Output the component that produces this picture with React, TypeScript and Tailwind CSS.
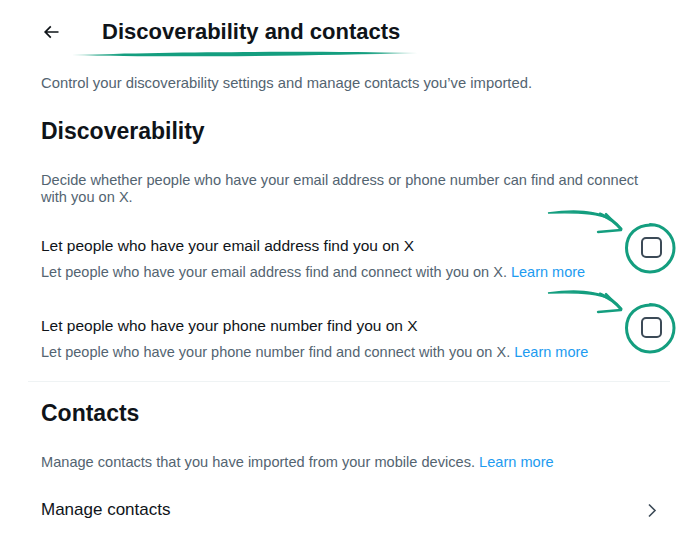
import React from "react";

const font = { fontFamily: '"Liberation Sans", Arial, sans-serif' };

function Checkbox() {
  return (
    <div className="w-[21px] h-[21px] rounded-[5px] border-2 border-[#3c4a57] bg-white" />
  );
}

function Row({ title, sub }: { title: string; sub: string }) {
  return (
    <div className="flex justify-between items-start pl-[13px] pr-[8px]">
      <div className="flex flex-col">
        <div className="text-[15.5px] leading-[20px] text-[#0f1419]">{title}</div>
        <div className="mt-[6px] text-[14.5px] leading-[20px] text-[#536471]">
          {sub} <span className="text-[#1d9bf0]">Learn more</span>
        </div>
      </div>
      <div className="mt-[1px]">
        <Checkbox />
      </div>
    </div>
  );
}

export default function App() {
  return (
    <div className="relative w-[700px] h-[558px] bg-white overflow-hidden" style={font}>
      <div className="ml-[28px] w-[642px] flex flex-col">
        {/* header */}
        <div className="h-[64px] flex items-center pl-[13px]">
          <svg width="20" height="20" viewBox="0 0 24 24" className="text-[#0f1419]">
            <path d="M7.414 13l5.043 5.04-1.414 1.42L3.586 12l7.457-7.46 1.414 1.42L7.414 11H21v2H7.414z" fill="currentColor" />
          </svg>
          <div className="ml-[41px] text-[22px] leading-[28px] font-bold text-[#0f1419]">
            Discoverability and contacts
          </div>
        </div>
        <div className="h-[38px] flex items-center pl-[13px] text-[14.8px] text-[#536471]">
          Control your discoverability settings and manage contacts you’ve imported.
        </div>
        <div className="h-[58px] flex items-center pl-[13px] text-[23px] font-bold text-[#0f1419]">
          Discoverability
        </div>
        <div className="pt-[12px] pl-[13px] max-w-[625px] text-[14.6px] leading-[17px] text-[#536471]">
          Decide whether people who have your email address or phone number can find and connect with you on X.
        </div>
        <div className="mt-[30px]">
          <Row
            title="Let people who have your email address find you on X"
            sub="Let people who have your email address find and connect with you on X."
          />
        </div>
        <div className="mt-[34px]">
          <Row
            title="Let people who have your phone number find you on X"
            sub="Let people who have your phone number find and connect with you on X."
          />
        </div>
        <div className="mt-[19px] h-px bg-[#eff3f4]" />
        <div className="mt-[17px] pl-[13px] text-[23px] leading-[28px] font-bold text-[#0f1419]">
          Contacts
        </div>
        <div className="mt-[25px] pl-[13px] text-[14.6px] leading-[20px] text-[#536471]">
          Manage contacts that you have imported from your mobile devices.{" "}
          <span className="text-[#1d9bf0]">Learn more</span>
        </div>
        <div className="mt-[28px] pl-[13px] pr-[13px] flex items-center justify-between">
          <div className="text-[17px] leading-[20px] text-[#0f1419]">Manage contacts</div>
          <svg width="10" height="15" viewBox="0 0 10 15">
            <path d="M2 1.5l6 6-6 6" fill="none" stroke="#3c4a57" strokeWidth="1.6" />
          </svg>
        </div>
      </div>

      {/* annotations overlay */}
      <svg
        className="absolute left-0 top-0 pointer-events-none"
        width="700"
        height="558"
        viewBox="0 0 700 558"
      >
        <defs>
          <linearGradient id="sw" x1="72" y1="0" x2="418" y2="0" gradientUnits="userSpaceOnUse">
            <stop offset="0" stopColor="#19a07f" stopOpacity="0.5" />
            <stop offset="0.15" stopColor="#149e7f" />
            <stop offset="0.85" stopColor="#149e7f" />
            <stop offset="1" stopColor="#19a07f" stopOpacity="0.3" />
          </linearGradient>
        </defs>
        <path d="M72 55 C 170 51.5, 320 51, 418 53 C 320 55.5, 170 58, 72 55 Z" fill="url(#sw)" />
        {[0, 80].map((dy) => (
          <g key={dy} transform={`translate(0 ${dy})`} stroke="#149e7f" strokeLinecap="round" fill="none">
            <path d="M548 213 C 575 209, 597 211, 607 218 C 597 213.5, 575 212, 548 213 Z" fill="#149e7f" strokeWidth="1.5" />
            <path d="M600 214 C 610 218, 616 223, 621 229" strokeWidth="3" />
            <path d="M606 214 L 621 229" strokeWidth="2.4" />
            <path d="M598 232 L 621 230" strokeWidth="2.4" />
            <path
              d="M650 224.5 C 663 224.5, 674 235, 674 248 C 674 261, 663 272, 650 272 C 637 272, 626.5 261, 626.5 248 C 626.5 235, 636 224.5, 652 225"
              strokeWidth="3"
            />
          </g>
        ))}
      </svg>
    </div>
  );
}
